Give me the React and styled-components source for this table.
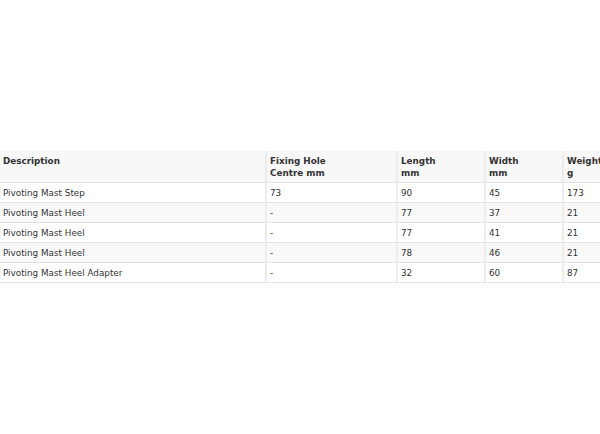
import React from "react";
import styled, { createGlobalStyle } from "styled-components";

const rows = [
  { desc: "Pivoting Mast Step", hole: "73", length: "90", width: "45", weight: "173" },
  { desc: "Pivoting Mast Heel", hole: "-", length: "77", width: "37", weight: "21" },
  { desc: "Pivoting Mast Heel", hole: "-", length: "77", width: "41", weight: "21" },
  { desc: "Pivoting Mast Heel", hole: "-", length: "78", width: "46", weight: "21" },
  { desc: "Pivoting Mast Heel Adapter", hole: "-", length: "32", width: "60", weight: "87" },
];

const GlobalStyle = createGlobalStyle`
  html, body {
    margin: 0;
    padding: 0;
    background: #ffffff;
    overflow: hidden;
  }
`;

const Page = styled.div`
  width: 600px;
  height: 434px;
  overflow: hidden;
  padding-top: 151px;
  box-sizing: border-box;
  font-family: "DejaVu Sans", Verdana, sans-serif;
  font-size: 8.8px;
  color: #333333;
`;

const Table = styled.table`
  border-collapse: collapse;
  table-layout: fixed;
  width: 640px;
`;

const Head = styled.th`
  text-align: left;
  vertical-align: top;
  font-weight: bold;
  line-height: 12px;
  padding: 4px 4px 3px 3px;
  background: #f8f8f8;
  border-bottom: 1px solid #e2e2e2;
  border-right: 2px solid #ececec;
`;

const Row = styled.tr`
  background: ${(p) => (p.$shade ? "#f9f9f9" : "#ffffff")};
`;

const Cell = styled.td`
  line-height: 12px;
  padding: 4px 4px 3px 3px;
  border-bottom: 1px solid #e2e2e2;
  border-right: 2px solid #ececec;
  white-space: nowrap;
`;

export default function App() {
  return (
    <Page>
      <GlobalStyle />
      <Table>
        <colgroup>
          <col style={{ width: 266 }} />
          <col style={{ width: 131 }} />
          <col style={{ width: 88 }} />
          <col style={{ width: 78 }} />
          <col style={{ width: 77 }} />
        </colgroup>
        <thead>
          <tr>
            <Head>Description</Head>
            <Head>
              Fixing Hole
              <br />
              Centre mm
            </Head>
            <Head>
              Length
              <br />
              mm
            </Head>
            <Head>
              Width
              <br />
              mm
            </Head>
            <Head>
              Weight
              <br />g
            </Head>
          </tr>
        </thead>
        <tbody>
          {rows.map((r, i) => (
            <Row key={i} $shade={i % 2 === 1}>
              <Cell>{r.desc}</Cell>
              <Cell>{r.hole}</Cell>
              <Cell>{r.length}</Cell>
              <Cell>{r.width}</Cell>
              <Cell>{r.weight}</Cell>
            </Row>
          ))}
        </tbody>
      </Table>
    </Page>
  );
}
